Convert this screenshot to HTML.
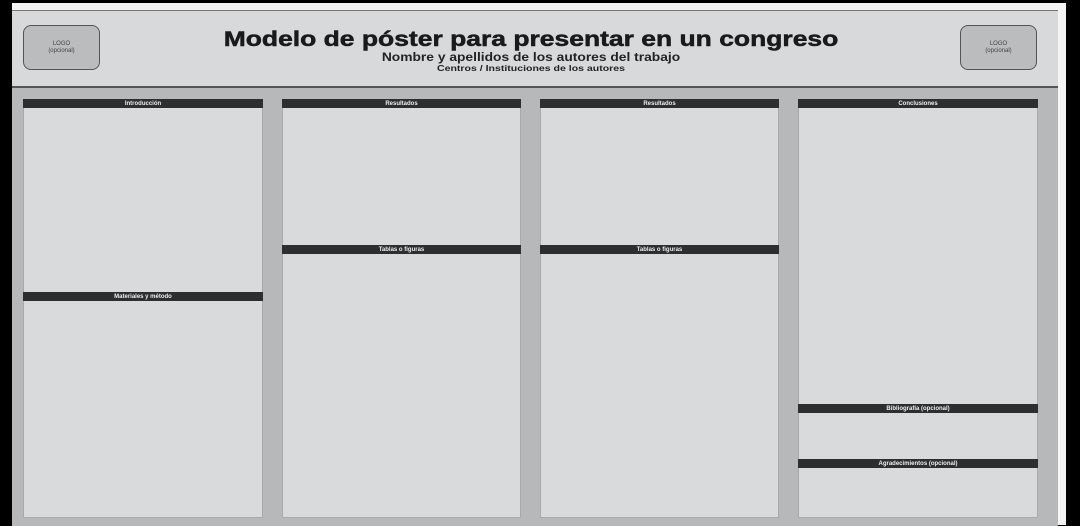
<!DOCTYPE html><html><head><style>
body{margin:0;width:1080px;height:525px;background:#000;position:relative;overflow:hidden;font-family:"Liberation Sans",sans-serif}
.a{position:absolute}
.bar{position:absolute;height:9px;background:#2e2e30;color:#eee;font-size:6px;font-weight:bold;text-align:center;line-height:10px}
.p{position:absolute;background:#d9dadc;border:1px solid #a8a9ab;box-sizing:border-box}
.logo{position:absolute;width:77px;height:45px;background:#bbbcbe;border:1.5px solid #555;border-radius:8px;box-sizing:border-box;font-size:6px;color:#444;text-align:center;line-height:7px;padding-top:15px}
.t{position:absolute;left:200px;width:662px;text-align:center;font-weight:bold;white-space:nowrap}
</style></head><body>
<div class="a" style="left:12px;top:3px;width:1054px;height:522px;background:#f4f4f4"></div>
<div class="a" style="left:12px;top:10px;width:1046px;height:515px;background:#b7b8ba;border-top:1px solid #777"></div>
<div class="a" style="left:12px;top:11px;width:1046px;height:75px;background:#d8d9db;border-bottom:2px solid #555"></div>
<div class="logo" style="left:23px;top:25px">LOGO<br>(opcional)</div>
<div class="logo" style="left:960px;top:25px">LOGO<br>(opcional)</div>
<div class="t" style="top:28px;font-size:21px;color:#1a1a1a;transform:scaleX(1.26);-webkit-text-stroke:0.5px #1a1a1a">Modelo de póster para presentar en un congreso</div>
<div class="t" style="top:50px;font-size:12px;color:#222;transform:scaleX(1.15)">Nombre y apellidos de los autores del trabajo</div>
<div class="t" style="top:63px;font-size:8.5px;color:#222;transform:scaleX(1.24)">Centros / Instituciones de los autores</div>

<div class="p" style="left:23px;top:99px;width:240px;height:419px"></div>
<div class="p" style="left:282px;top:99px;width:239px;height:419px"></div>
<div class="p" style="left:540px;top:99px;width:239px;height:419px"></div>
<div class="p" style="left:798px;top:99px;width:240px;height:419px"></div>

<div class="bar" style="left:23px;top:99px;width:240px">Introducción</div>
<div class="bar" style="left:23px;top:292px;width:240px">Materiales y método</div>
<div class="bar" style="left:282px;top:99px;width:239px">Resultados</div>
<div class="bar" style="left:282px;top:245px;width:239px">Tablas o figuras</div>
<div class="bar" style="left:540px;top:99px;width:239px">Resultados</div>
<div class="bar" style="left:540px;top:245px;width:239px">Tablas o figuras</div>
<div class="bar" style="left:798px;top:99px;width:240px">Conclusiones</div>
<div class="bar" style="left:798px;top:404px;width:240px">Bibliografía (opcional)</div>
<div class="bar" style="left:798px;top:459px;width:240px">Agradecimientos (opcional)</div>
</body></html>
